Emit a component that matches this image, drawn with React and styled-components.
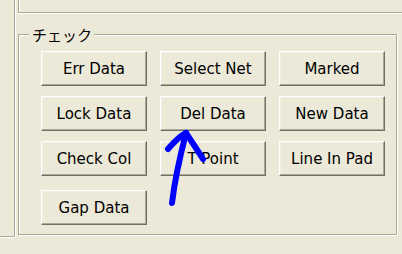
import React from 'react'
import styled, { createGlobalStyle } from 'styled-components'

const GlobalStyle = createGlobalStyle`
  html, body {
    margin: 0;
    padding: 0;
    background: #ece9d8;
  }
  * {
    box-sizing: border-box;
  }
`

const buttons = [
  { label: 'Err Data' },
  { label: 'Select Net' },
  { label: 'Marked' },
  { label: 'Lock Data' },
  { label: 'Del Data' },
  { label: 'New Data' },
  { label: 'Check Col' },
  { label: 'T Point' },
  { label: 'Line In Pad' },
  { label: 'Gap Data', shift: 4 },
]

const App = () => {
  return (
    <>
      <GlobalStyle />
      <Window>
        <SidePanel />
        <Main>
          <TopPanel />
          <GroupBox>
            <GroupTitle>チェック</GroupTitle>
            <ButtonGrid>
              {buttons.map((b) => (
                <Button key={b.label} type="button" $shift={b.shift}>
                  {b.label}
                </Button>
              ))}
            </ButtonGrid>
          </GroupBox>
        </Main>
        <Arrow viewBox="0 0 402 254" width="402" height="254">
          <g fill="none" stroke="#0000ff" strokeWidth="6" strokeLinecap="round" strokeLinejoin="round">
            <path d="M172 203 C174 186 178 164 186 133" />
            <path d="M168 149 C174 142 180 136 186 133" />
            <path d="M186 133 C192 142 198 151 203 159" />
          </g>
        </Arrow>
      </Window>
    </>
  )
}

export default App

const Window = styled.div`
  position: relative;
  width: 402px;
  height: 254px;
  overflow: hidden;
  display: flex;
  align-items: flex-start;
  background: #ece9d8;
  font-family: "DejaVu Sans", "Liberation Sans", sans-serif;
`

const SidePanel = styled.div`
  flex: none;
  width: 15px;
  height: 237px;
  border-right: 1px solid #aca899;
  border-bottom: 1px solid #aca899;
  box-shadow: 1px 1px 0 #fff;
`

const Main = styled.div`
  flex: none;
  margin-left: 3px;
  width: 384px;
  display: flex;
  flex-direction: column;
`

const TopPanel = styled.div`
  height: 13px;
  border-left: 1px solid #aca899;
  border-bottom: 1px solid #aca899;
  box-shadow: inset 1px 0 0 #fff, 0 1px 0 #fff;
`

const GroupBox = styled.div`
  position: relative;
  margin-top: 21px;
  width: 379px;
  height: 201px;
  border: 1px solid #aca899;
  box-shadow: inset 1px 1px 0 #fff, 1px 1px 0 #fff;
  padding: 16px 0 0 22px;
`

const GroupTitle = styled.span`
  position: absolute;
  top: -9px;
  left: 10px;
  padding: 0 2px 0 3px;
  background: #ece9d8;
  font-family: "Noto Sans CJK JP", sans-serif;
  font-size: 15px;
  line-height: 18px;
  color: #000;
`

const ButtonGrid = styled.div`
  display: grid;
  grid-template-columns: repeat(3, 106px);
  column-gap: 13px;
  row-gap: 10px;
  align-items: start;
`

const Button = styled.button`
  height: 35px;
  margin: ${(p) => (p.$shift ? `${p.$shift}px` : '0')} 0 0 0;
  padding: 0;
  background: #ece9d8;
  border: 1px solid;
  border-color: #fff #716f64 #716f64 #fff;
  box-shadow: inset -1px -1px 0 #aca899, inset 1px 1px 0 #f1efe2;
  border-radius: 0;
  font-family: "DejaVu Sans", sans-serif;
  font-size: 15px;
  color: #000;
  text-align: center;
`

const Arrow = styled.svg`
  position: absolute;
  left: 0;
  top: 0;
  pointer-events: none;
`
